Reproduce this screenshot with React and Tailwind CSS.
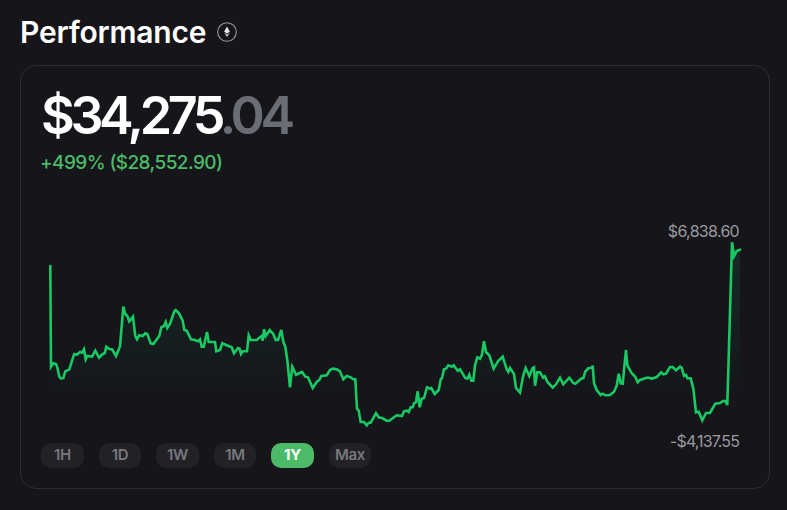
const linePoints = [
  [50.3,266],[51,366.7],[53.3,363.3],[56,364],[57.3,367.3],[59.3,376.7],[60.7,378.3],[63.3,378],[65.3,371.3],[69.3,369.3],[73.3,356.7],[74.3,354],[76.7,354.7],[80,352],[82,352.7],[84,349.3],[85.7,359.3],[87.3,356],[92,356.7],[95.3,350.7],[99,357.7],[102.7,354],[104.7,353.3],[106.3,346.7],[109.3,349],[112,349.3],[116,356],[119.3,348],[120,346.7],[123.3,306.7],[125.3,314],[127.3,316],[129.3,321.3],[133,316.7],[135.3,336],[137,339.3],[139.3,335.3],[142.7,336],[145.3,333.3],[147.3,334],[150.7,343.3],[153.3,344],[159.3,336],[161.3,327.3],[164,326],[165.7,322],[167.3,328],[170,324],[174.3,311.3],[175.7,310],[179,313.3],[182.7,320.7],[184.3,330],[186.7,330.7],[191,339.3],[195,340],[198,341.3],[200,339.3],[201.7,346.7],[203.7,346.7],[207,332],[208.7,342],[215,342],[216.3,351.3],[220,350],[222.3,343.3],[226.7,345.3],[231.7,347.3],[234,353.3],[238,348],[239.7,348.7],[241,354],[242.7,351.3],[247,351.3],[248.7,335.3],[250.7,340],[256.7,340],[260,337.3],[261.7,336],[262.7,340.7],[264,329.3],[265.7,336],[269.7,330],[273.3,334],[275.7,340],[278,340],[281.3,330],
  [283.3,341.7],[285.3,346.7],[287.3,360],[290,387.3],[292.3,366.7],[296,374.7],[302,372],[305.3,376.7],[308,377.3],[312.7,388],[316.7,382],[319.3,380],[321.3,376],[326.7,375.3],[330,370],[332.7,368.7],[336.7,369.3],[340,371.3],[343.3,379.3],[346.7,376],[350.7,377.3],[353.3,379.3],[355.3,379.3],[357,408.7],[358.7,410.7],[360.7,422],[364,422],[366.7,425.3],[368.7,422.7],[370.7,422.7],[376,413.3],[378.7,417.3],[382,418],[386.7,420.7],[389.3,420.7],[396.7,415.3],[402,416],[404,411.3],[406.7,410.7],[408.7,412],[410.7,407.3],[412.7,407.3],[414,403.3],[416,402],[417.7,391.3],[419.7,407.3],[421.7,398.7],[424,398],[427,387.3],[430,388.7],[431.3,388],[434.7,394],[438.7,390],[440.7,379.3],[442,378],[444,369.3],[446,368.7],[448.3,365.3],[452,366.7],[453.7,365.3],[457.7,370.7],[460,369.3],[465.3,378],[467.3,378.7],[469.3,374.7],[471.3,380.7],[473.3,380.7],[475,365.3],[477.3,357.3],[480,358.7],[482,354.7],[484,341.3],[486,352],[489.3,355.3],[493.7,368.7],[498.3,360.7],[502.7,356.7],[506.7,369.3],[508.3,372],[510,368],[514,374],[516,388],[520,392.7],[523.3,375.3],[525.7,368],[529.3,376],[532.7,368],[534,367.3],
  [535,385.7],[537.3,372.3],[540,372.3],[543.3,377.7],[545,376.3],[547.3,381.7],[552.7,387.7],[556,384.3],[560,377.7],[563.3,384.3],[569.3,377.7],[573.3,383],[575.3,383.7],[581.7,378.3],[583.3,378.3],[585.3,371.7],[588.3,368.3],[592,367.7],[592.7,365.7],[594,383.3],[596.7,390],[600.7,395],[602.7,393.7],[605.3,395.3],[610,395],[614,391.7],[616.7,385.7],[618.7,373.7],[620.7,383.3],[622.7,383.7],[626,350],[627.3,365],[631.7,373.3],[635.3,376.7],[637.7,382.3],[640,380],[646.7,377.7],[650,377.7],[651.3,378.7],[656.7,377],[661.3,372.3],[663.3,374.3],[666,373.7],[670,367],[672.7,367],[676,370.3],[680,366.7],[681.7,367.7],[684,375.7],[686,375],[687.3,378.3],[690.7,378.3],[693.3,388.3],[696,412.3],[698.7,411.7],[702.3,420.3],[706,413],[710,413],[715.3,403.7],[720,403],[723.3,401],[725.3,401],[727.3,405],[732,242.3],[734,256.3],[736.7,251],[740,249.7],
]

const linePath = linePoints.map(([x, y], i) => `${i ? 'L' : 'M'}${x} ${y}`).join(' ')
const areaPath = `${linePath} L740 425 L50.3 425 Z`

const ranges = [
  { label: '1H', width: 'w-[43px]' },
  { label: '1D', width: 'w-[42px]' },
  { label: '1W', width: 'w-[43px]' },
  { label: '1M', width: 'w-[42px]' },
  { label: '1Y', width: 'w-[43px]', active: true },
  { label: 'Max', width: 'w-[42px]' },
]

const EthBadge = () => (
  <svg width="20" height="20" viewBox="0 0 20 20" fill="none">
    <circle cx="10" cy="10" r="9.3" stroke="#9b9ba0" strokeWidth="1.1" />
    <path d="M10 4.6 L12.9 9.8 L10 11.5 L7.1 9.8 Z" fill="#e8e8ea" />
    <path d="M7.2 10.8 L10 12.5 L12.8 10.8 L10 15 Z" fill="#cfcfd3" />
  </svg>
)

const App = () => {
  return (
    <div className="w-[787px] h-[510px] overflow-hidden bg-[#15151a] px-5 pt-[12px] font-['Inter',sans-serif]">
      <div className="flex items-center gap-[11px] h-[40px]">
        <h1 className="text-[30px] leading-[40px] font-semibold text-white tracking-[-0.2px]">Performance</h1>
        <EthBadge />
      </div>
      <div className="mt-[13px] h-[424px] w-[750px] rounded-2xl border border-[#2d2d32] pl-5 pr-[30px] pt-[20px]">
        <div className="text-[52px] leading-[60px] font-semibold tracking-[-4.4px] text-white">
          $34,275<span className="text-[#6b6d75]">.04</span>
        </div>
        <div className="mt-[3px] -ml-[1px] text-[19px] leading-[28px] font-medium tracking-[-0.6px] text-[#4cbb68]">+499% ($28,552.90)</div>
        <div className="mt-[44px] h-[20px] text-right text-[16px] leading-[20px] tracking-[-0.7px] text-[#9a9a9f]">$6,838.60</div>
        <svg width="698" height="184" viewBox="41 241 698 184" className="overflow-visible">
          <defs>
            <linearGradient id="perfFill" gradientUnits="userSpaceOnUse" x1="0" y1="240" x2="0" y2="400">
              <stop offset="0" stopColor="#18c964" stopOpacity="0.13" />
              <stop offset="1" stopColor="#18c964" stopOpacity="0" />
            </linearGradient>
          </defs>
          <path d={areaPath} fill="url(#perfFill)" />
          <path d={linePath} fill="none" stroke="#18c964" strokeWidth="2.6" strokeLinejoin="miter" strokeLinecap="round" />
        </svg>
        <div className="flex justify-between items-start mt-[18px]">
          <div className="flex gap-[15px]">
            {ranges.map((r) => (
              <button
                key={r.label}
                className={`${r.width} h-[25px] rounded-[10px] text-[15px] tracking-[-0.3px] ${r.active ? 'bg-[#4cbb68] text-white font-bold' : 'bg-[#212126] text-[#77787d] font-semibold'}`}
              >
                {r.label}
              </button>
            ))}
          </div>
          <div className="mt-[-12px] text-[16px] leading-[20px] tracking-[-0.9px] text-[#9a9a9f]">-$4,137.55</div>
        </div>
      </div>
    </div>
  )
}

export default App
